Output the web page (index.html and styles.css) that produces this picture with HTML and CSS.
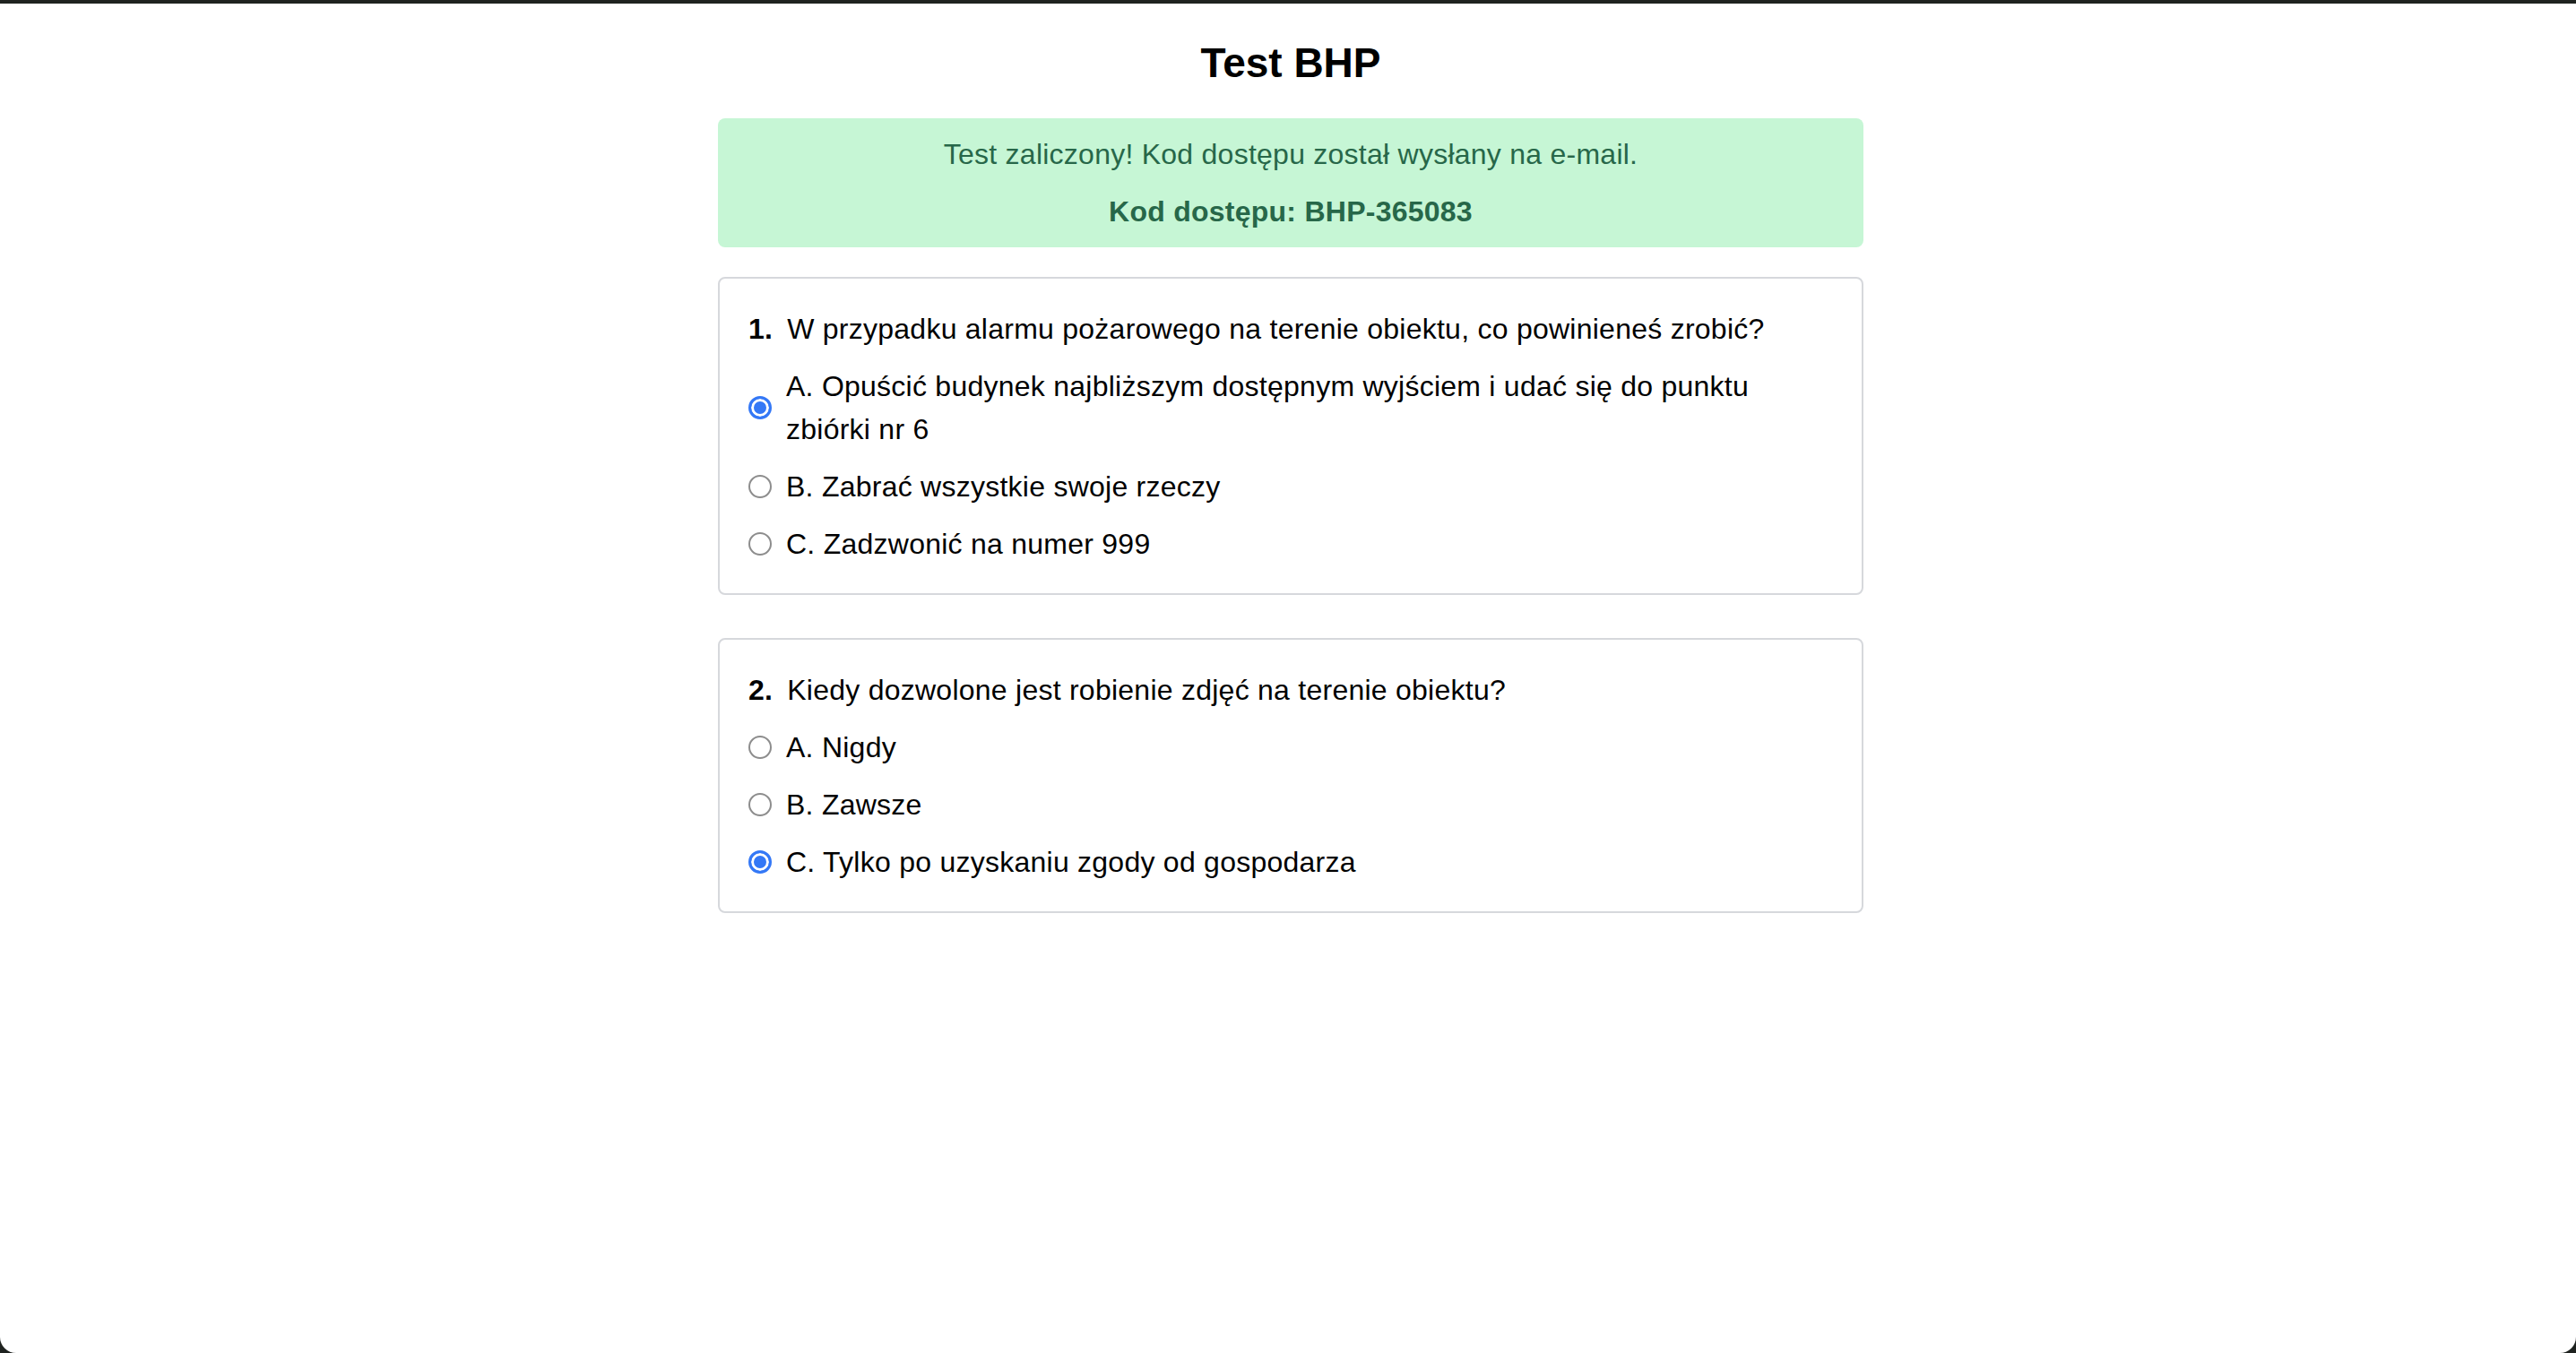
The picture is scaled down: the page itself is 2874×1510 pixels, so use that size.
FILE: index.html
```html
<!DOCTYPE html>
<html lang="pl">
<head>
<meta charset="utf-8">
<title>Test BHP</title>
<link rel="stylesheet" href="styles.css">
</head>
<body>
<main class="page">
  <h1 class="title">Test BHP</h1>
  <div class="alert">
    <p class="alert-msg">Test zaliczony! Kod dostępu został wysłany na e-mail.</p>
    <p class="alert-code">Kod dostępu: BHP-365083</p>
  </div>

  <section class="card">
    <p class="question"><span class="num">1.</span>W przypadku alarmu pożarowego na terenie obiektu, co powinieneś zrobić?</p>
    <label class="option"><input class="radio" type="radio" name="q1" checked><span class="opt-text">A. Opuścić budynek najbliższym dostępnym wyjściem i udać się do punktu zbiórki nr 6</span></label>
    <label class="option"><input class="radio" type="radio" name="q1"><span class="opt-text">B. Zabrać wszystkie swoje rzeczy</span></label>
    <label class="option"><input class="radio" type="radio" name="q1"><span class="opt-text">C. Zadzwonić na numer 999</span></label>
  </section>

  <section class="card">
    <p class="question"><span class="num">2.</span>Kiedy dozwolone jest robienie zdjęć na terenie obiektu?</p>
    <label class="option"><input class="radio" type="radio" name="q2"><span class="opt-text">A. Nigdy</span></label>
    <label class="option"><input class="radio" type="radio" name="q2"><span class="opt-text">B. Zawsze</span></label>
    <label class="option"><input class="radio" type="radio" name="q2" checked><span class="opt-text">C. Tylko po uzyskaniu zgody od gospodarza</span></label>
  </section>
</main>
</body>
</html>
```

FILE: styles.css
```css
html {
  margin: 0;
  background: #1f2320;
}

body {
  margin: 4px 0 0;
  padding-left: 6px;
  min-height: calc(100vh - 4px);
  box-sizing: border-box;
  background: #ffffff;
  border-radius: 0 0 18px 18px;
  font-family: "Liberation Sans", Arial, sans-serif;
  color: #000;
}

.page {
  width: 1278px;
  margin: 0 auto;
  padding-top: 37px;
}

.title {
  margin: 0 0 33px;
  font-size: 46px;
  line-height: 58px;
  font-weight: 700;
  text-align: center;
}

.alert {
  background: #c6f6d5;
  color: #276749;
  border-radius: 8px;
  padding: 16px;
  text-align: center;
  margin-bottom: 33px;
}

.alert p {
  margin: 0;
  font-size: 32px;
  line-height: 48px;
  letter-spacing: 0.25px;
}

.alert .alert-code {
  margin-top: 16px;
  font-weight: 700;
}

.card {
  border: 2px solid #d6d8dc;
  border-radius: 8px;
  padding: 32px 32px 31px;
  margin-bottom: 48px;
}

.question {
  margin: 0;
  font-size: 32px;
  line-height: 48px;
  letter-spacing: 0.25px;
}

.num {
  font-weight: 700;
  margin-right: 16px;
}

.option {
  display: flex;
  align-items: center;
  gap: 16px;
  margin-top: 16px;
  font-size: 32px;
  line-height: 48px;
  letter-spacing: 0.25px;
}

.radio {
  appearance: none;
  -webkit-appearance: none;
  margin: 0;
  flex: 0 0 26px;
  width: 26px;
  height: 26px;
  border-radius: 50%;
  border: 2px solid #8d8d8d;
  background: #fff;
  box-sizing: border-box;
}

.radio:checked {
  border: 3px solid #3478f6;
  background: #3478f6;
  box-shadow: inset 0 0 0 3px #ffffff;
}
```
